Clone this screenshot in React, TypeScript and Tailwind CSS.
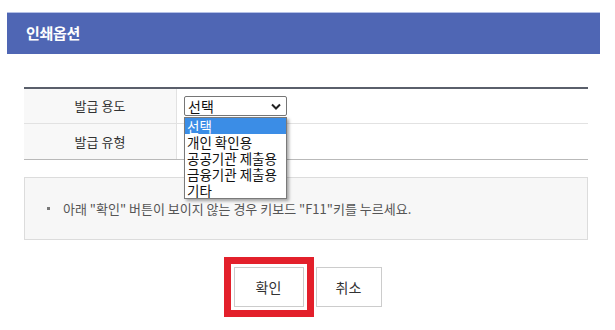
import React from "react";

const font = { fontFamily: '"Noto Sans CJK KR", "Noto Sans", sans-serif' };

const options = ["선택", "개인 확인용", "공공기관 제출용", "금융기관 제출용", "기타"];

function Chevron(): JSX.Element {
    return (
        <svg width="10" height="7" viewBox="0 0 10 7" className="text-[#222]">
            <path d="M1 1.5 L5 5.5 L9 1.5" fill="none" stroke="currentColor" strokeWidth="2" />
        </svg>
    );
}

export default function App(): JSX.Element {
    return (
        <div className="w-[615px] h-[330px] bg-white overflow-hidden" style={font}>
            <div className="pt-[12px] pl-[7px]">
                <div className="w-[593px] h-[42px] bg-[#4f66b4] border-t border-[#b4c0e6] flex items-center pl-[19px]">
                    <span className="text-white text-[15px] font-bold tracking-[-0.3px]">인쇄옵션</span>
                </div>
            </div>

            <div className="ml-[24px] w-[564px] mt-[33px] border-t-2 border-[#5a5f6b] border-b border-b-[#b9b9b9]">
                <div className="flex h-[35px] border-b border-[#e2e2e2]">
                    <div className="w-[153px] bg-[#f8f8f8] border-r border-[#e2e2e2] flex items-center justify-center text-[13px] text-[#333]">
                        발급 용도
                    </div>
                    <div className="flex-1 flex items-center pl-[7px] relative">
                        <div className="w-[103px] h-[20px] border border-[#767676] rounded-[2px] bg-white flex items-center justify-between pl-[3px] pr-[5px] text-[14px] leading-[16px] text-[#111]">
                            <span>선택</span>
                            <Chevron />
                        </div>
                        <div className="absolute left-[7px] top-[28px] w-[103px] bg-white border border-[#7a7a7a] shadow-[2px_2px_3px_rgba(0,0,0,0.35)] z-10">
                            {options.map((o, i) => (
                                <div
                                    key={o}
                                    className={`h-[16px] flex items-center pl-[2px] text-[13.5px] whitespace-nowrap ${
                                        i === 0 ? "bg-[#3b8de6] text-white" : "text-[#111]"
                                    }`}
                                >
                                    {o}
                                </div>
                            ))}
                        </div>
                    </div>
                </div>
                <div className="flex h-[35px]">
                    <div className="w-[153px] bg-[#f8f8f8] border-r border-[#e2e2e2] flex items-center justify-center text-[13px] text-[#333]">
                        발급 유형
                    </div>
                    <div className="flex-1" />
                </div>
            </div>

            <div className="ml-[24px] w-[564px] h-[63px] mt-[17px] bg-[#f7f7f7] border border-[#dcdcdc] flex items-center pl-[22px]">
                <span className="w-[3px] h-[3px] bg-[#777] mr-[13px]" />
                <span className="text-[13px] text-[#555]">
                    아래 "확인" 버튼이 보이지 않는 경우 키보드 "F11"키를 누르세요.
                </span>
            </div>

            <div className="flex justify-center items-center mt-[17px] pl-[1px]">
                <div className="border-[7px] border-[#e3202b] p-[3px] -ml-[11px]">
                    <button className="w-[70px] h-[40px] border border-[#cccccc] bg-white text-[14px] text-[#333]">
                        확인
                    </button>
                </div>
                <button className="w-[66px] h-[40px] ml-[2px] border border-[#cccccc] bg-white text-[14px] text-[#333]">
                    취소
                </button>
            </div>
        </div>
    );
}
